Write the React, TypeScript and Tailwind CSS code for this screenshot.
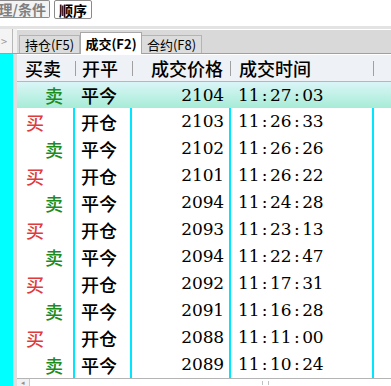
import React from "react"

interface Trade {
  side: "买" | "卖"
  kind: string
  price: number
  time: string
}

const trades: Trade[] = [
  { side: "卖", kind: "平今", price: 2104, time: "11:27:03" },
  { side: "买", kind: "开仓", price: 2103, time: "11:26:33" },
  { side: "卖", kind: "平今", price: 2102, time: "11:26:26" },
  { side: "买", kind: "开仓", price: 2101, time: "11:26:22" },
  { side: "卖", kind: "平今", price: 2094, time: "11:24:28" },
  { side: "买", kind: "开仓", price: 2093, time: "11:23:13" },
  { side: "卖", kind: "平今", price: 2094, time: "11:22:47" },
  { side: "买", kind: "开仓", price: 2092, time: "11:17:31" },
  { side: "卖", kind: "平今", price: 2091, time: "11:16:28" },
  { side: "买", kind: "开仓", price: 2088, time: "11:11:00" },
  { side: "卖", kind: "平今", price: 2089, time: "11:10:24" },
]

const cjk = "font-['Noto_Sans_CJK_SC',sans-serif]"
const num = "font-['DejaVu_Serif',serif]"

// fixed-width cells so digits and colons line up like the old GDI font
function Mono({ text }: { text: string }) {
  return (
    <>
      {text.split("").map((ch, i) => (
        <span key={i} className="inline-block w-[10.7px] text-center">
          {ch}
        </span>
      ))}
    </>
  )
}

export default function App() {
  return (
    <div className={`w-[391px] h-[386px] overflow-hidden bg-white flex flex-col ${cjk}`}>
      {/* toolbar */}
      <div className="h-[26px] flex items-start gap-[4px] bg-white">
        <div className="h-[18px] w-[50px] border border-l-0 border-[#8a8a8a] rounded-r-[2px] bg-[#f3f3f3] flex items-center justify-end pr-[3px] text-[14px] leading-none font-bold text-[#808080] whitespace-nowrap">
          理/条件
        </div>
        <div className="h-[19px] w-[38px] border border-[#8a8a8a] rounded-[2px] bg-white flex items-center justify-center text-[14px] leading-none font-bold text-black whitespace-nowrap">
          顺序
        </div>
      </div>
      <div className="h-[3px] bg-[#e3e3e3]" />

      <div className="flex flex-1 min-h-0">
        {/* left strip */}
        <div className="w-[17px] flex flex-col">
          <div className="h-[25px] flex border-b border-[#a0a0a0]">
            <div className="w-[13px] bg-[#f4f4f4] border-r border-[#b8b8b8] flex items-center text-[11px] text-[#9a9a9a] leading-none pl-px">
              &gt;
            </div>
            <div className="w-[4px] bg-[#f2f2f2]" />
          </div>
          <div className="flex-1 flex">
            <div className="w-[13px] bg-[#00ffff]" />
            <div className="w-[4px] bg-[#dedede]" />
          </div>
        </div>

        {/* main panel */}
        <div className="flex-1 flex flex-col min-w-0">
          {/* tab bar */}
          <div className="h-[25px] bg-[#d9d9d9] border-t border-white border-b border-b-[#a0a0a0] flex items-end pl-[2px] text-[13px] leading-none">
            <div className="w-[61px] h-[18px] border border-b-0 border-[#b4b4b4] bg-[#dcdcdc] flex items-center justify-center text-black">
              持仓(F5)
            </div>
            <div className="w-[62px] h-[22px] -mb-px border border-b-0 border-[#a8a8a8] bg-white flex items-center justify-center font-bold text-black">
              成交(F2)
            </div>
            <div className="w-[60px] h-[18px] border border-b-0 border-l-0 border-[#b4b4b4] bg-[#dcdcdc] flex items-center justify-center text-black">
              合约(F8)
            </div>
          </div>

          {/* header */}
          <div className="h-[27px] bg-[#eef2f6] border-t border-white flex items-center text-[18px] font-medium leading-none text-black">
            <div className="w-[58px] h-full flex items-center relative pl-[8px]">
              买卖
              <span className="absolute right-[-1px] top-[6px] h-[15px] w-px bg-[#a0a0a0]" />
            </div>
            <div className="w-[57px] h-full flex items-center relative pl-[7px]">
              开平
              <span className="absolute right-[-1px] top-[6px] h-[15px] w-px bg-[#a0a0a0]" />
            </div>
            <div className="w-[99px] h-full flex items-center justify-end relative pr-[8px]">
              成交价格
              <span className="absolute right-0 top-[6px] h-[15px] w-px bg-[#a0a0a0]" />
            </div>
            <div className="w-[143px] h-full flex items-center relative pl-[8px]">
              成交时间
              <span className="absolute right-0 top-[6px] h-[15px] w-px bg-[#a0a0a0]" />
            </div>
            <div className="flex-1" />
          </div>

          {/* rows */}
          <div className="flex-1 min-h-0 overflow-hidden">
            {trades.map((t, i) => {
              const selected = i === 0
              const line = selected ? "border-r-2 border-transparent" : "border-r-2 border-[#00e6ff]"
              return (
                <div
                  key={i}
                  className={`h-[27px] flex items-center text-[18px] font-medium leading-none ${
                    selected
                      ? "bg-gradient-to-b from-[#daf5f7] to-[#a6ecd6] border-t border-[#a9b8d8]"
                      : "bg-white"
                  }`}
                >
                  <div className={`w-[58px] h-full flex items-center ${line} ${t.side === "买" ? "pl-[9px] text-[#e03a3a]" : "pl-[28px] text-[#1c8c1c]"}`}>
                    {t.side}
                  </div>
                  <div className={`w-[57px] h-full flex items-center pl-[6px] text-black ${line}`}>{t.kind}</div>
                  <div className={`w-[99px] h-full flex items-center justify-end pr-[5px] text-black text-[17px] font-normal ${num} ${line}`}>
                    <Mono text={String(t.price)} />
                  </div>
                  <div className={`w-[143px] h-full flex items-center pl-[7px] text-black text-[17px] font-normal ${num} ${line}`}>
                    <Mono text={t.time} />
                  </div>
                  <div className="flex-1 h-full" />
                </div>
              )
            })}
          </div>

          {/* horizontal scrollbar */}
          <div className="h-[8px] border-t border-[#b4b4b4] bg-white flex">
            <div className="w-[13px] h-full border-r border-[#c8c8c8] bg-[#f0f0f0] flex items-center justify-center text-[7px] leading-none text-[#909090]">
              ◂
            </div>
            <div className="flex-1 relative">
              <span className="absolute left-[232px] top-[2px] w-[7px] h-[4px] border-x border-[#c0c0c0]" />
            </div>
          </div>
        </div>
      </div>
    </div>
  )
}
